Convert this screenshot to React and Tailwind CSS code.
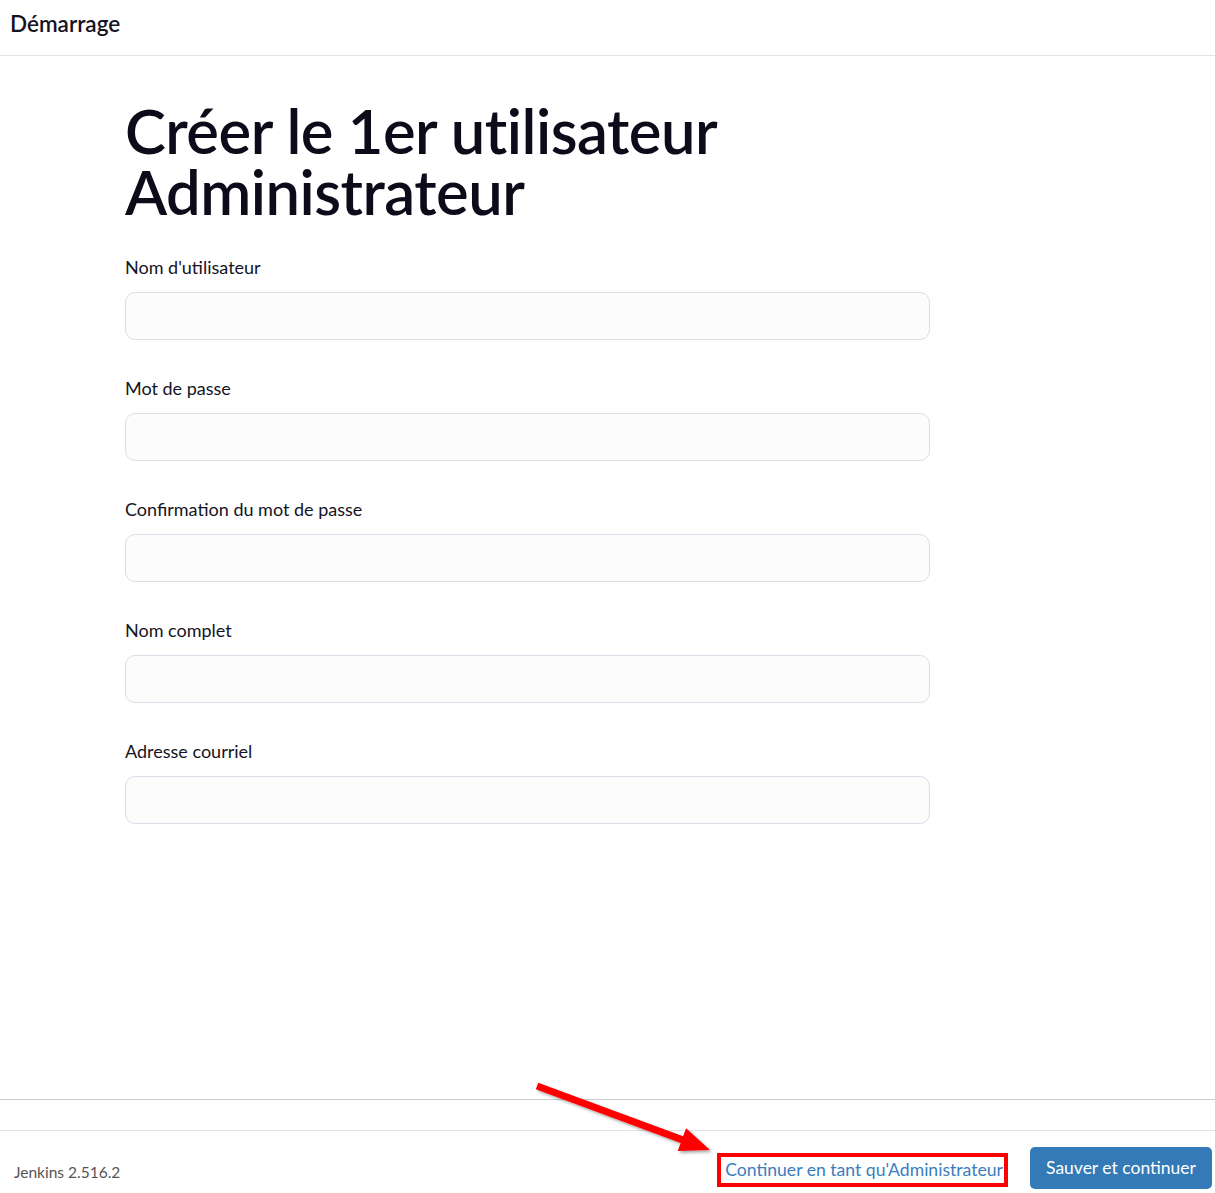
import React from 'react';

const fields = [
  "Nom d'utilisateur",
  'Mot de passe',
  'Confirmation du mot de passe',
  'Nom complet',
  'Adresse courriel',
];

const FONT = "font-['Lato','Noto_Sans',sans-serif]";

const Field = ({ label }) => (
  <div className="mb-[37px]">
    <label className="block text-[18px] leading-[22px] text-[#14141f] mb-[14px]">{label}</label>
    <input
      type={label.startsWith('Mot') || label.startsWith('Confirmation') ? 'password' : 'text'}
      className="block w-[805px] h-[48px] rounded-[10px] border border-[#d9dee9] bg-[#fcfcfd] px-3 outline-none"
    />
  </div>
);

const App = () => {
  return (
    <div className={`${FONT} relative flex flex-col min-h-[1193px] bg-white text-[#0b0b1a]`}>
      <header className="h-[56px] flex items-start pt-[10px] px-[10px] border-b border-[#e3e3e3]">
        <h1 className="text-[22.5px] leading-[28px] font-semibold text-[#14141f]">Démarrage</h1>
      </header>

      <main className="flex-1 pl-[125px] pt-[44px]">
        <h2 className="text-[61.5px] leading-[61px] font-semibold tracking-[-0.5px] mb-[34px]">
          Créer le 1er utilisateur
          <br />
          Administrateur
        </h2>
        {fields.map((f) => (
          <Field key={f} label={f} />
        ))}
      </main>

      <div className="h-[31px] border-t border-[#cbcbcb]" />
      <footer className="h-[63px] border-t border-[#e3e3e3] flex items-center justify-between pl-[14px] pr-[3px]">
        <span className="text-[15.5px] text-[#555] mt-[21px]">Jenkins 2.516.2</span>
        <div className="flex items-center gap-[22px]">
          <a
            href="#"
            className="text-[17.6px] leading-[22px] text-[#3b7dbd] pl-[4px] pr-[1px] py-[2px] border-4 border-[#ff0000] mt-[15px]"
          >
            Continuer en tant qu'Administrateur
          </a>
          <button className="h-[42px] w-[182px] rounded-[5px] bg-[#337ab7] text-white text-[17.5px] pt-[2px] mt-[11px]">
            Sauver et continuer
          </button>
        </div>
      </footer>

      <svg className="absolute left-0 top-0 pointer-events-none" width="1215" height="1193">
        <defs>
          <filter id="sh" x="-20%" y="-20%" width="140%" height="140%">
            <feDropShadow dx="2" dy="2" stdDeviation="1.5" floodColor="#000" floodOpacity="0.35" />
          </filter>
        </defs>
        <polygon
          points="538.2,1082.7 683.1,1136.3 686.1,1128.3 710,1150 677.7,1150.9 680.7,1142.9 535.8,1089.3"
          fill="#f00"
          filter="url(#sh)"
        />
      </svg>
    </div>
  );
};

export default App;
